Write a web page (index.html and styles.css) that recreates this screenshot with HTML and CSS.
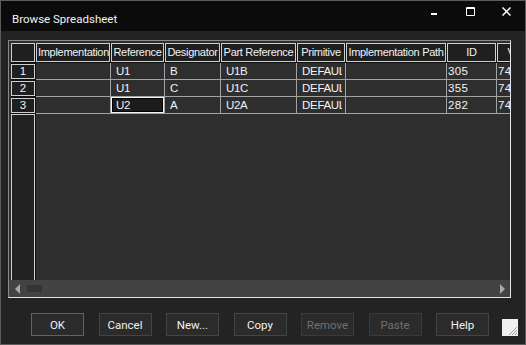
FILE: index.html
```html
<!DOCTYPE html>
<html lang="en">
  <head>
    <meta charset="UTF-8" />
    <title>Browse Spreadsheet</title>
    <link rel="stylesheet" href="styles.css">
  </head>
  <body>
    <div class="window">
      <div class="titlebar">
        <span class="title">Browse Spreadsheet</span>
        <div class="controls">
          <svg class="ctl ctl-min" width="6" height="2" viewBox="0 0 6 2"><rect width="6" height="2" fill="#fff"/></svg>
          <svg class="ctl ctl-max" width="9" height="9" viewBox="0 0 9 9"><path d="M0.5 0.5H8.5V8.5H0.5Z M0 1.5H9" fill="none" stroke="#fff" stroke-width="1"/></svg>
          <svg class="ctl ctl-close" width="9" height="9" viewBox="0 0 9 9"><path d="M0.5 0.5L8.5 8.5M8.5 0.5L0.5 8.5" stroke="#fff" stroke-width="1.5"/></svg>
        </div>
      </div>

      <div class="content">
        <div class="sheet">
          <div class="table">
            <div class="row head-row">
              <div class="rh"><div class="box"></div></div>
              <div class="hc"><div class="box">Implementation</div></div>
              <div class="hc"><div class="box">Reference</div></div>
              <div class="hc"><div class="box">Designator</div></div>
              <div class="hc"><div class="box">Part Reference</div></div>
              <div class="hc"><div class="box">Primitive</div></div>
              <div class="hc"><div class="box">Implementation Path</div></div>
              <div class="hc"><div class="box">ID</div></div>
              <div class="hc"><div class="box">Value</div></div>
            </div>

            <div class="row data-row">
              <div class="rh"><div class="box">1</div></div>
              <div class="dc"></div>
              <div class="dc"><span>U1</span></div>
              <div class="dc"><span>B</span></div>
              <div class="dc"><span>U1B</span></div>
              <div class="dc"><span>DEFAULT</span></div>
              <div class="dc"></div>
              <div class="dc num"><span>305</span></div>
              <div class="dc num"><span>74LS00</span></div>
            </div>
            <div class="row data-row">
              <div class="rh"><div class="box">2</div></div>
              <div class="dc"></div>
              <div class="dc"><span>U1</span></div>
              <div class="dc"><span>C</span></div>
              <div class="dc"><span>U1C</span></div>
              <div class="dc"><span>DEFAULT</span></div>
              <div class="dc"></div>
              <div class="dc num"><span>355</span></div>
              <div class="dc num"><span>74LS00</span></div>
            </div>
            <div class="row data-row short">
              <div class="rh"><div class="box">3</div></div>
              <div class="dc"></div>
              <div class="dc selected"><span>U2</span></div>
              <div class="dc"><span>A</span></div>
              <div class="dc"><span>U2A</span></div>
              <div class="dc"><span>DEFAULT</span></div>
              <div class="dc"></div>
              <div class="dc num"><span>282</span></div>
              <div class="dc num"><span>74LS00</span></div>
            </div>

            <div class="row rest-row">
              <div class="rh"><div class="box"></div></div>
            </div>
          </div>

          <div class="hscroll">
            <svg class="arrow" width="5" height="10" viewBox="0 0 5 10"><path d="M5 0V10L0 5Z" fill="#a8a8a8"/></svg>
            <div class="track"><div class="thumb"></div></div>
            <svg class="arrow" width="5" height="10" viewBox="0 0 5 10"><path d="M0 0V10L5 5Z" fill="#a8a8a8"/></svg>
          </div>
        </div>

        <div class="footer">
          <div class="buttons">
            <button class="btn btn-default">OK</button>
            <button class="btn">Cancel</button>
            <button class="btn">New...</button>
            <button class="btn">Copy</button>
            <button class="btn" disabled>Remove</button>
            <button class="btn" disabled>Paste</button>
            <button class="btn">Help</button>
          </div>
          <svg class="grip" width="16" height="17" viewBox="0 0 16 17">
            <rect width="16" height="17" fill="#f0f0f0"/>
            <path d="M15 8L7 16M15 11L10 16M15 14L13 16" stroke="#a0a0a0" stroke-width="1"/>
          </svg>
        </div>
      </div>
    </div>
  </body>
</html>
```

FILE: styles.css
```css
html,
body {
  margin: 0;
  padding: 0;
  background: #232323;
}

.window {
  width: 526px;
  height: 345px;
  box-sizing: border-box;
  border: 1px solid #5c5c5c;
  background: #232323;
  display: flex;
  flex-direction: column;
  overflow: hidden;
}

.titlebar {
  height: 30px;
  flex: none;
  background: #0b0b0b;
  display: flex;
  align-items: center;
  padding-left: 11px;
}

.title {
  font-family: Roboto, "Noto Sans", sans-serif;
  font-size: 11.5px;
  color: #f2f2f2;
  padding-top: 6px;
}

.controls {
  margin-left: auto;
  display: flex;
  align-items: flex-start;
  align-self: flex-start;
  padding-top: 6px;
}

.ctl {
  display: block;
}

.ctl-min {
  margin-top: 6px;
}

.ctl-max {
  margin-left: 29px;
}

.ctl-close {
  margin-left: 27px;
  margin-right: 14px;
}

.content {
  flex: 1;
  display: flex;
  flex-direction: column;
  padding: 9px 0 0 7px;
}

/* spreadsheet */

.sheet {
  width: 503px;
  height: 258px;
  box-sizing: border-box;
  border: 1px solid;
  border-color: #8a8a8a #e4e4e4 #e4e4e4 #8a8a8a;
  background: #2e2e2e;
  display: flex;
  flex-direction: column;
}

.table {
  --cols: 25px 75px 54px 56px 76px 49px 101px 50px 48px;
  flex: 1;
  min-height: 0;
  overflow: hidden;
  padding: 2px 0 0 2px;
  display: flex;
  flex-direction: column;
  font-family: "Liberation Sans", Arial, sans-serif;
  color: #f2f2f2;
}

.row {
  display: grid;
  grid-template-columns: var(--cols);
  flex: none;
}

.head-row {
  height: 20px;
  font-size: 11px;
  letter-spacing: -0.3px;
}

.rh,
.hc {
  background: #111;
  padding: 0 1px 1px 0;
  min-width: 0;
}

.box {
  height: 100%;
  box-sizing: border-box;
  border: 1px solid #cfcfcf;
  background: #1f1f1f;
  overflow: hidden;
  white-space: nowrap;
  text-align: center;
}

.hc .box {
  line-height: 17px;
  padding: 0 1px;
}

.data-row {
  height: 17px;
  font-size: 11.5px;
}

.data-row.short {
  height: 16px;
}

.data-row .rh {
  padding: 1px 1px 1px 0;
}

.data-row .rh .box {
  line-height: 13px;
}

.dc {
  border-right: 1px solid #a3a3a3;
  border-bottom: 1px solid #a3a3a3;
  padding: 0 3px 0 5px;
  line-height: 16px;
  white-space: nowrap;
  min-width: 0;
  overflow: hidden;
}

.dc span {
  display: block;
  overflow: hidden;
  letter-spacing: -0.3px;
}

.dc.num {
  padding-left: 1px;
  padding-right: 0;
}

.dc.num span {
  letter-spacing: 0.4px;
}

.dc.selected {
  background: #1c1c1c;
  box-shadow: inset 0 0 0 1px #f4f4f4, inset 0 0 0 2px #000;
}

.rest-row {
  flex: 1;
}

.rest-row .rh {
  padding: 1px 1px 0 0;
}

.rest-row .box {
  border-bottom: none;
  background: #222;
}

.hscroll {
  height: 17px;
  flex: none;
  background: #434343;
  display: flex;
  align-items: center;
  padding: 0 5px 0 6px;
}

.arrow {
  display: block;
  flex: none;
}

.track {
  flex: 1;
  height: 7px;
  padding-left: 7px;
}

.thumb {
  width: 15px;
  height: 7px;
  background: #343434;
}

/* buttons */

.footer {
  display: flex;
  align-items: flex-end;
  margin-top: 15px;
  padding-left: 23px;
}

.buttons {
  display: grid;
  grid-template-columns: repeat(7, 53px);
  column-gap: 14.5px;
}

.btn {
  height: 23px;
  margin: 0;
  padding: 0;
  border: 1px solid #444;
  background: #2b2b2b;
  color: #f0f0f0;
  font-family: Roboto, "Noto Sans", sans-serif;
  font-size: 11.5px;
}

.btn-default {
  border-color: #626262;
}

.btn:disabled {
  color: #707070;
  border-color: #3a3a3a;
}

.grip {
  display: block;
  margin-left: 13px;
}
```
